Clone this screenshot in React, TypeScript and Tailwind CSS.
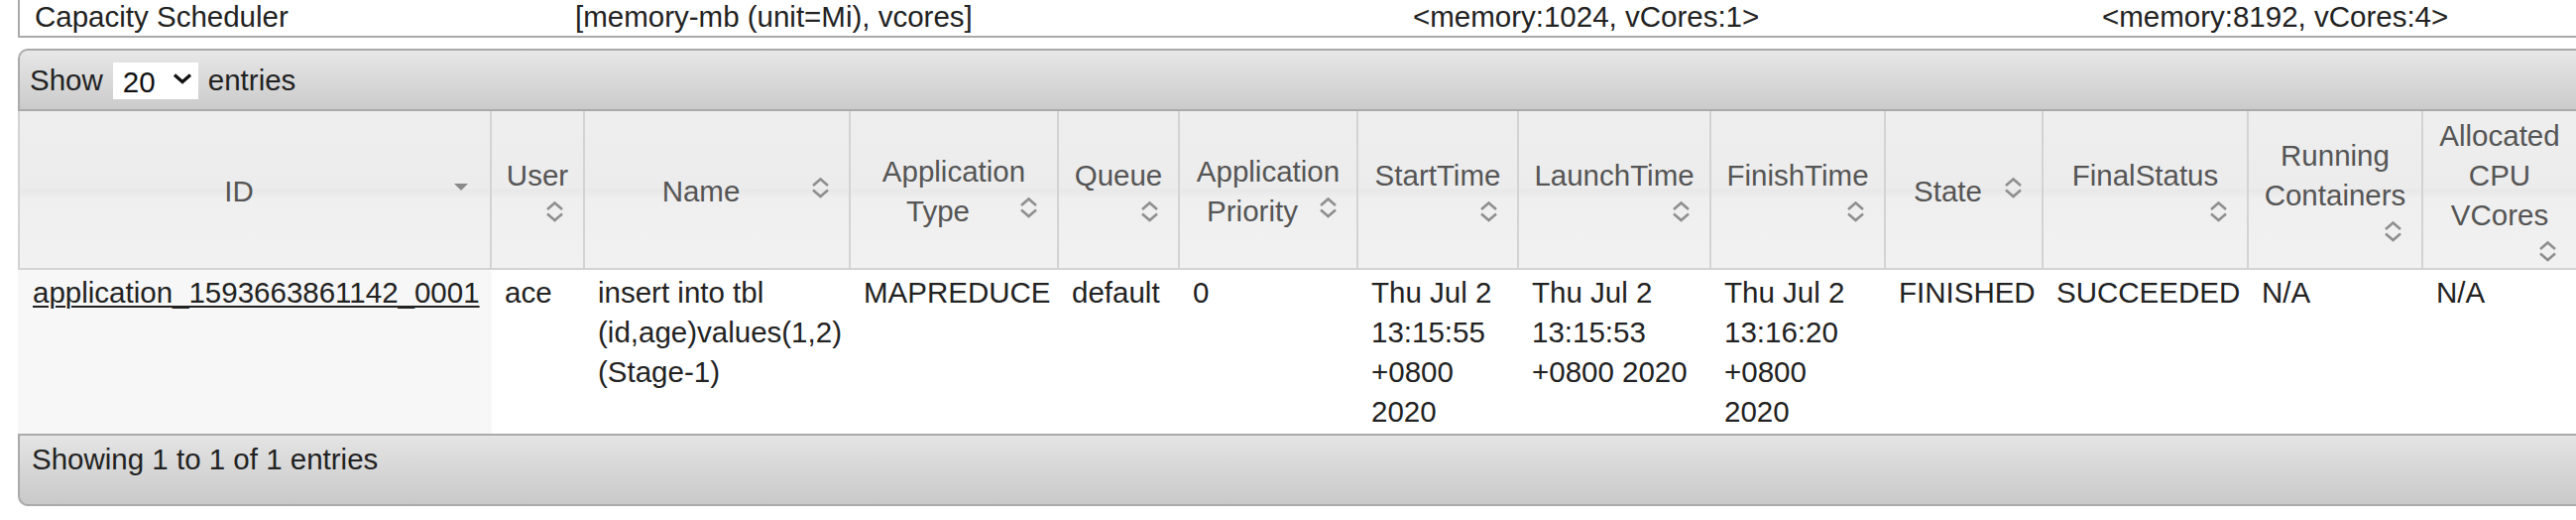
import React from 'react';

type Column = {
  label: string[];
  w: string;
  icon: 'inline' | 'below' | 'desc';
};

const columns: Column[] = [
  { label: ['ID'], w: 'w-[478px]', icon: 'desc' },
  { label: ['User'], w: 'w-[94px]', icon: 'below' },
  { label: ['Name'], w: 'w-[268px]', icon: 'inline' },
  { label: ['Application', 'Type'], w: 'w-[210px]', icon: 'inline' },
  { label: ['Queue'], w: 'w-[122px]', icon: 'below' },
  { label: ['Application', 'Priority'], w: 'w-[180px]', icon: 'inline' },
  { label: ['StartTime'], w: 'w-[162px]', icon: 'below' },
  { label: ['LaunchTime'], w: 'w-[194px]', icon: 'below' },
  { label: ['FinishTime'], w: 'w-[176px]', icon: 'below' },
  { label: ['State'], w: 'w-[159px]', icon: 'inline' },
  { label: ['FinalStatus'], w: 'w-[207px]', icon: 'below' },
  { label: ['Running', 'Containers'], w: 'w-[176px]', icon: 'below' },
  { label: ['Allocated', 'CPU', 'VCores'], w: 'w-[156px]', icon: 'below' },
];

// one application row, cell text split into the lines the page shows
const row: string[][] = [
  ['application_1593663861142_0001'],
  ['ace'],
  ['insert into tbl', '(id,age)values(1,2)', '(Stage-1)'],
  ['MAPREDUCE'],
  ['default'],
  ['0'],
  ['Thu Jul 2', '13:15:55', '+0800', '2020'],
  ['Thu Jul 2', '13:15:53', '+0800 2020'],
  ['Thu Jul 2', '13:16:20', '+0800', '2020'],
  ['FINISHED'],
  ['SUCCEEDED'],
  ['N/A'],
  ['N/A'],
];

function SortIcon() {
  return (
    <svg width="32" height="32" viewBox="0 0 32 32" className="block shrink-0">
      <path
        d="M9 14 L16.5 7.5 L24 14 M9 18.5 L16.5 25 L24 18.5"
        fill="none"
        stroke="#8f8f8f"
        strokeWidth="2.6"
      />
    </svg>
  );
}

function DescIcon() {
  return (
    <svg width="32" height="32" viewBox="0 0 32 32" className="block shrink-0">
      <path d="M9 12 L23 12 L16 19 Z" fill="#8a8a8a" />
    </svg>
  );
}

function HeaderCell({ col, first }: { col: Column; first: boolean }) {
  const lines = col.label;
  const last = lines[lines.length - 1];
  const icon = col.icon === 'desc' ? <DescIcon /> : <SortIcon />;

  return (
    <th
      className={`${col.w} ${first ? 'border-l-2' : ''} border-r-2 border-b-2 border-[#d3d3d3] px-[13px] pt-[5px] pb-[1px] align-middle font-normal text-[#555] bg-[linear-gradient(to_bottom,#eeeeee_0%,#ececec_49%,#e8e8e8_50%,#efefef_56%,#f1f1f1_100%)]`}
    >
      {lines.slice(0, -1).map((l) => (
        <div key={l} className="text-center whitespace-nowrap">
          {l}
        </div>
      ))}
      {col.icon === 'below' ? (
        <>
          <div className="text-center whitespace-nowrap">{last}</div>
          <div className="flex justify-end">{icon}</div>
        </>
      ) : (
        <div className="flex items-start">
          <span className="flex-1 text-center whitespace-nowrap">{last}</span>
          {icon}
        </div>
      )}
    </th>
  );
}

export default function App() {
  return (
    <div className="w-full h-[524px] overflow-hidden bg-white text-[#222] text-[29.5px] leading-[40px] font-['Liberation_Sans',Arial,sans-serif]">
      {/* scheduler summary row (rest of that table is above the view) */}
      <div className="ml-[18px] w-[2700px] h-[38px] flex border-l-2 border-b-2 border-[#aaa] leading-[34px]">
        <div className="w-[545px] pl-[15px]">Capacity Scheduler</div>
        <div className="w-[845px] pl-[15px]">[memory-mb (unit=Mi), vcores]</div>
        <div className="w-[695px] pl-[15px]">&lt;memory:1024, vCores:1&gt;</div>
        <div className="w-[595px] pl-[15px]">&lt;memory:8192, vCores:4&gt;</div>
      </div>

      <div className="ml-[18px] mt-[11px] w-[2582px]">
        {/* toolbar */}
        <div className="h-[63px] flex items-center pl-[10px] border-t-2 border-b-2 border-l-2 border-[#aaa] rounded-tl-[10px] bg-[linear-gradient(to_bottom,#e7e7e7,#cbcbcb)]">
          <span>Show</span>
          <div className="relative ml-[10px] w-[86px] h-[35px] bg-white">
            <select
              defaultValue="20"
              className="appearance-none w-full h-full bg-white pl-[10px] leading-[35px] outline-none text-[#111]"
            >
              <option>10</option>
              <option>20</option>
              <option>50</option>
              <option>100</option>
            </select>
            <svg
              className="absolute right-[6px] top-[10px] pointer-events-none"
              width="20"
              height="12"
              viewBox="0 0 20 12"
            >
              <path d="M2 2.5 L10 9.5 L18 2.5" fill="none" stroke="#111" strokeWidth="3.2" />
            </svg>
          </div>
          <span className="ml-[10px]">entries</span>
        </div>

        <table className="table-fixed w-[2582px] border-separate border-spacing-0">
          <thead>
            <tr>
              {columns.map((c, i) => (
                <HeaderCell key={c.label.join(' ')} col={c} first={i === 0} />
              ))}
            </tr>
          </thead>
          <tbody>
            <tr>
              {row.map((lines, i) => (
                <td
                  key={i}
                  className={`align-top pt-[3px] pb-[2px] pr-[8px] ${
                    i === 0 ? 'pl-[15px] bg-[#f7f7f7]' : 'pl-[13px] bg-white'
                  }`}
                >
                  {i === 0 ? (
                    <a href="#" className="underline decoration-2 underline-offset-[3px] text-[#222]">
                      {lines[0]}
                    </a>
                  ) : (
                    lines.map((l) => (
                      <div key={l} className="whitespace-nowrap">
                        {l}
                      </div>
                    ))
                  )}
                </td>
              ))}
            </tr>
          </tbody>
        </table>

        {/* footer */}
        <div className="h-[73px] pl-[12px] pt-[4px] border-2 border-r-0 border-[#aaa] rounded-bl-[10px] bg-[linear-gradient(to_bottom,#e4e4e4,#c9c9c9)]">
          Showing 1 to 1 of 1 entries
        </div>
      </div>
    </div>
  );
}
